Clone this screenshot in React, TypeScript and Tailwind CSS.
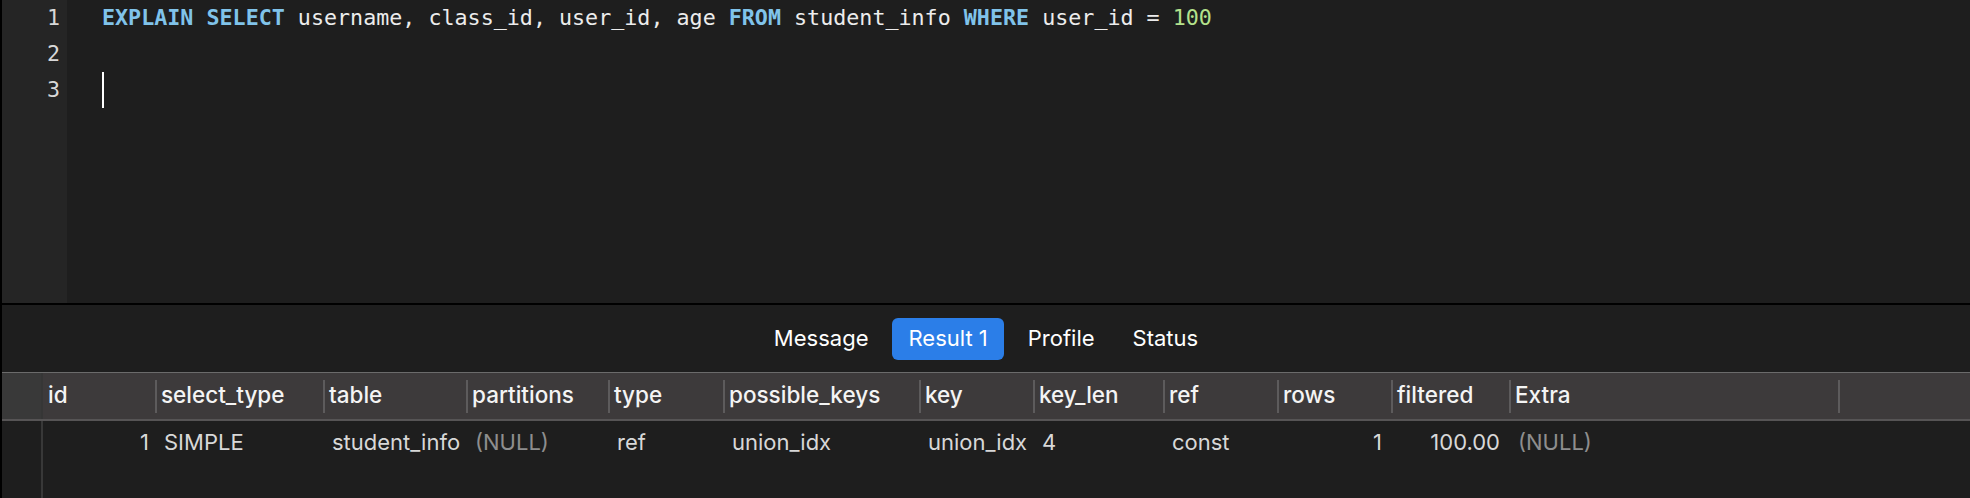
import React from 'react';

type Col = {
  name: string;
  width: string;
  value: string;
  right?: boolean;
  muted?: boolean;
};

const columns: Col[] = [
  { name: 'id', width: 'w-[112px]', value: '1', right: true },
  { name: 'select_type', width: 'w-[168px]', value: 'SIMPLE' },
  { name: 'table', width: 'w-[143px]', value: 'student_info' },
  { name: 'partitions', width: 'w-[142px]', value: '(NULL)', muted: true },
  { name: 'type', width: 'w-[115px]', value: 'ref' },
  { name: 'possible_keys', width: 'w-[196px]', value: 'union_idx' },
  { name: 'key', width: 'w-[114px]', value: 'union_idx' },
  { name: 'key_len', width: 'w-[130px]', value: '4' },
  { name: 'ref', width: 'w-[114px]', value: 'const' },
  { name: 'rows', width: 'w-[114px]', value: '1', right: true },
  { name: 'filtered', width: 'w-[118px]', value: '100.00', right: true },
  { name: 'Extra', width: 'w-[329px]', value: '(NULL)', muted: true },
];

const tabs = ['Message', 'Result 1', 'Profile', 'Status'];

const mono = { fontFamily: '"DejaVu Sans Mono", monospace' };

function Divider() {
  return <div className="h-[33px] w-[2px] shrink-0 bg-[#5d5b5c]" />;
}

export default function App() {
  return (
    <div
      className="flex h-[498px] w-[1970px] flex-col overflow-hidden border-l-2 border-black bg-[#1e1e1e]"
      style={{ fontFamily: 'Inter, "Liberation Sans", sans-serif' }}
    >
      {/* EDITOR */}
      <div className="flex h-[303px] shrink-0 text-[21.7px] leading-[36px]" style={mono}>
        <div className="w-[65px] shrink-0 bg-[#252525] pr-[7px] text-right text-[#d8d8d8]">
          <div className="h-[36px]">1</div>
          <div className="h-[36px]">2</div>
          <div className="h-[36px]">3</div>
        </div>
        <div className="flex-1 pl-[35px] text-[#ececec] whitespace-pre">
          <div className="h-[36px]">
            <span className="font-bold text-[#80c3ea]">EXPLAIN SELECT</span>
            {' username, class_id, user_id, age '}
            <span className="font-bold text-[#80c3ea]">FROM</span>
            {' student_info '}
            <span className="font-bold text-[#80c3ea]">WHERE</span>
            {' user_id = '}
            <span className="text-[#b4e28c]">100</span>
          </div>
          <div className="h-[36px]" />
          <div className="flex h-[36px] items-start">
            <div className="h-[36px] w-[2px] bg-white" />
          </div>
        </div>
      </div>
      <div className="h-[2px] shrink-0 bg-black" />

      {/* TABS */}
      <div className="flex h-[67px] shrink-0 items-center justify-center gap-[10px]">
        {tabs.map(t => (
          <div
            key={t}
            className={`flex h-[42px] items-center rounded-[6px] text-[22px] text-white ${
              t === 'Result 1' ? 'bg-[#2b7ee8] px-[16px]' : 'px-[14px]'
            }`}
          >
            {t}
          </div>
        ))}
      </div>

      {/* HEADER */}
      <div className="flex h-[49px] shrink-0 border-t border-b-2 border-t-[#6b6b6b] border-b-[#565455] bg-[#3d3a3b] text-[22.5px] font-medium text-[#f4f4f4]">
        <div className="w-[41px] shrink-0 border-r-2 border-[#363636] bg-[#393939]" />
        {columns.map((c, i) => (
          <div key={c.name} className={`flex shrink-0 items-center ${c.width}`}>
            {i > 0 && <Divider />}
            <span className={`mb-[3px] ${i > 0 ? 'pl-[4px]' : 'pl-[5px]'}`}>{c.name}</span>
          </div>
        ))}
        <div className="flex flex-1 items-center">
          <Divider />
        </div>
      </div>

      {/* ROWS */}
      <div className="flex flex-1 text-[22px]">
        <div className="w-[41px] shrink-0 border-r-2 border-[#383838]" />
        <div className="flex h-[42px] flex-1">
          {columns.map((c, i) => (
            <div
              key={c.name}
              className={`flex shrink-0 items-center ${c.width} ${
                c.right ? (i === 0 ? 'justify-end pr-[6px]' : 'justify-end pr-[9px]') : 'pl-[9px]'
              } ${c.muted ? 'text-[#8e8e8e]' : 'text-[#d8d8d8]'}`}
            >
              {c.value}
            </div>
          ))}
        </div>
      </div>
    </div>
  );
}
